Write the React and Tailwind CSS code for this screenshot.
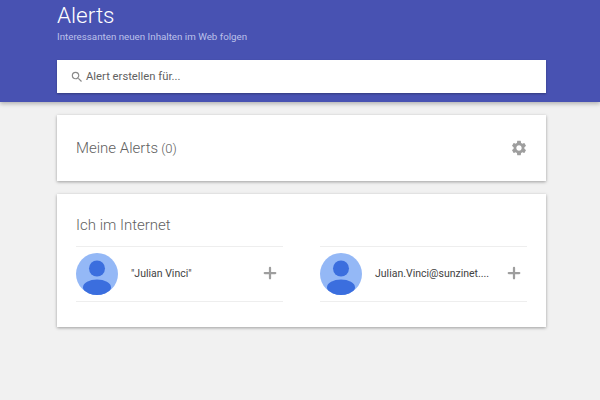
import { Plus } from 'lucide-react';

function Avatar() {
  return (
    <svg viewBox="0 0 42 42" className="w-[42px] h-[42px] shrink-0">
      <defs>
        <clipPath id="avatar-clip">
          <circle cx="21" cy="21" r="21" />
        </clipPath>
      </defs>
      <circle cx="21" cy="21" r="21" fill="#94b8f6" />
      <g clipPath="url(#avatar-clip)" fill="#3b6ede">
        <circle cx="21" cy="15.5" r="8" />
        <ellipse cx="21" cy="34.5" rx="14" ry="8" />
      </g>
    </svg>
  );
}

function PersonRow({ label }) {
  return (
    <div className="flex-1 min-w-0 border-y border-[#eeeeee] h-[56px] flex items-center">
      <Avatar />
      <span className="ml-[13px] whitespace-nowrap text-[10.5px] text-[#424242]">{label}</span>
      <Plus className="ml-auto mr-[4px] mb-[2px] w-[18px] h-[18px] text-[#9e9e9e]" strokeWidth={3} />
    </div>
  );
}

export default function App() {
  return (
    <div className="w-[600px] h-[400px] overflow-hidden bg-[#f1f1f1] font-['Roboto',sans-serif]">
      {/* Header */}
      <header className="relative z-10 h-[102px] bg-[#4852b2] pl-[57px] shadow-[0_2px_4px_rgba(0,0,0,0.25)]">
        <h1 className="text-[22.5px] leading-[30px] font-light text-white">Alerts</h1>
        <p className="text-[9.75px] leading-[14px] text-[#bcc1ea]">Interessanten neuen Inhalten im Web folgen</p>
        <div className="mt-[16px] h-[33px] w-[489px] bg-white flex items-center pl-[13px] shadow-[0_1px_2px_rgba(0,0,0,0.3)]">
          <svg viewBox="0 0 24 24" className="w-[14px] h-[14px]" fill="#8a8a8a">
            <path d="M15.5 14h-.79l-.28-.27A6.47 6.47 0 0 0 16 9.5 6.5 6.5 0 1 0 9.5 16c1.61 0 3.09-.59 4.23-1.57l.27.28v.79l5 4.99L20.49 19l-4.99-5zm-6 0C7.01 14 5 11.99 5 9.5S7.01 5 9.5 5 14 7.01 14 9.5 11.99 14 9.5 14z" />
          </svg>
          <span className="ml-[2px] pt-[2px] text-[11.25px] text-[#616161]">Alert erstellen für...</span>
        </div>
      </header>

      {/* Cards */}
      <main className="pt-[13px] pl-[57px] pr-[54px] flex flex-col gap-[13px]">
        <section className="h-[66px] bg-white pl-[19px] pr-[18px] flex items-center justify-between shadow-[0_1px_3px_rgba(0,0,0,0.35)]">
          <h2 className="flex items-baseline gap-[3px] text-[15px] font-light text-[#616161]">
            <span>Meine Alerts</span>
            <span className="text-[13px]">(0)</span>
          </h2>
          <svg viewBox="0 0 24 24" className="w-[18px] h-[18px]" fill="#9e9e9e">
            <path d="M19.14 12.94c.04-.3.06-.61.06-.94 0-.32-.02-.64-.07-.94l2.03-1.58a.49.49 0 0 0 .12-.61l-1.92-3.32a.488.488 0 0 0-.59-.22l-2.39.96c-.5-.38-1.03-.7-1.62-.94l-.36-2.54a.484.484 0 0 0-.48-.41h-3.84c-.24 0-.43.17-.47.41l-.36 2.54c-.59.24-1.13.57-1.62.94l-2.39-.96c-.22-.08-.47 0-.59.22L2.74 8.87c-.12.21-.08.47.12.61l2.03 1.58c-.05.3-.09.63-.09.94s.02.64.07.94l-2.03 1.58a.49.49 0 0 0-.12.61l1.92 3.32c.12.22.37.29.59.22l2.39-.96c.5.38 1.03.7 1.62.94l.36 2.54c.05.24.24.41.48.41h3.84c.24 0 .44-.17.47-.41l.36-2.54c.59-.24 1.13-.56 1.62-.94l2.39.96c.22.08.47 0 .59-.22l1.92-3.32c.12-.22.07-.47-.12-.61l-2.01-1.58zM12 15.6c-1.98 0-3.6-1.62-3.6-3.6s1.62-3.6 3.6-3.6 3.6 1.62 3.6 3.6-1.62 3.6-3.6 3.6z" />
          </svg>
        </section>

        <section className="h-[133px] bg-white px-[19px] pt-[21px] shadow-[0_1px_3px_rgba(0,0,0,0.35)]">
          <h2 className="text-[15px] leading-[20px] font-light text-[#616161]">Ich im Internet</h2>
          <div className="mt-[11px] flex gap-[37px]">
            <PersonRow label={'"Julian Vinci"'} />
            <PersonRow label="Julian.Vinci@sunzinet...." />
          </div>
        </section>
      </main>
    </div>
  );
}
